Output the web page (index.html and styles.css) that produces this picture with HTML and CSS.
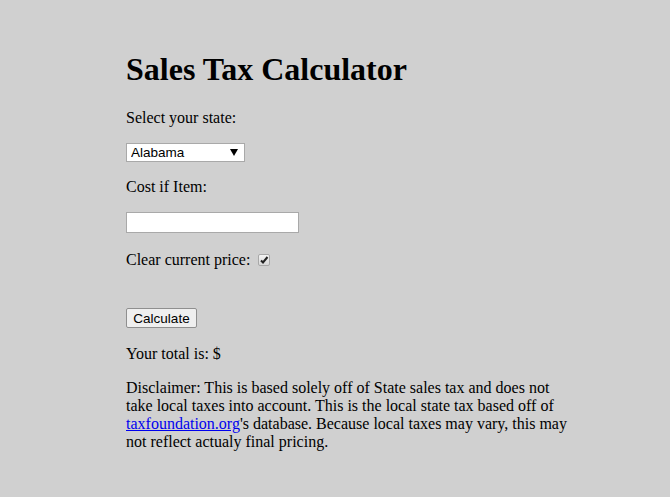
FILE: index.html
```html
<!DOCTYPE html>
<html>
<head>
<meta charset="utf-8">
<link rel="stylesheet" href="styles.css">
</head>
<body class="page">
<div class="wrap">
  <h1 class="title">Sales Tax Calculator</h1>
  <p class="line">Select your state:</p>
  <select class="state">
    <option>Alabama</option>
  </select>
  <p class="line">Cost if Item:</p>
  <input class="cost" type="text">
  <p class="line check-line">Clear current price: <input class="check" type="checkbox" checked></p>
  <div class="spacer"></div>
  <button class="calc">Calculate</button>
  <p class="line total">Your total is: $</p>
  <p class="disclaimer">Disclaimer: This is based solely off of State sales tax and does not take local taxes into account. This is the local state tax based off of <a class="link" href="#">taxfoundation.org</a>'s database. Because local taxes may vary, this may not reflect actualy final pricing.</p>
</div>
</body>
</html>
```
FILE: styles.css
```css
html, body { background: #d0d0d0; }
.page {
  margin: 0;
  font-family: "Liberation Serif", "Times New Roman", serif;
  font-size: 16px;
  color: #000;
}
.wrap {
  width: 450px;
  margin-left: 126px;
  padding-top: 30px;
}
.title {
  font-size: 32px;
  font-weight: bold;
  margin: 21px 0;
}
.line { margin: 16px 0; }
.state {
  -webkit-appearance: none;
  appearance: none;
  display: block;
  width: 119px;
  height: 19px;
  font-family: "Liberation Sans", Arial, sans-serif;
  font-size: 13.5px;
  color: #000;
  border: 1px solid #a9a9a9;
  border-radius: 0;
  padding: 0 0 0 4px;
  background: #fff url("data:image/svg+xml;utf8,<svg xmlns='http://www.w3.org/2000/svg' width='8' height='7'><path d='M0 0H8L4 7Z' fill='black'/></svg>") no-repeat right 6px center;
}
.cost {
  display: block;
  box-sizing: border-box;
  width: 173px;
  height: 21px;
  border: 1px solid #a9a9a9;
  padding: 1px 2px;
  background: #fff;
  margin: 0;
}
.check-line { margin-top: 18px; }
.check {
  -webkit-appearance: none;
  appearance: none;
  width: 12px;
  height: 12px;
  margin: 0 3px 0 4px;
  vertical-align: -1px;
  border: 1px solid #a8a8a8;
  border-radius: 2px;
  background: url("data:image/svg+xml;utf8,<svg xmlns='http://www.w3.org/2000/svg' width='10' height='10'><path d='M2 5.5L4 7.5L8.5 2' stroke='%23222' stroke-width='2' fill='none'/></svg>") no-repeat center, linear-gradient(#f4f4f4, #d8d8d8);
}
.spacer { height: 23px; }
.calc {
  display: block;
  font-family: "Liberation Sans", Arial, sans-serif;
  font-size: 13.5px;
  color: #000;
  width: 71px;
  height: 20px;
  padding: 0;
  background: #efefef;
  border: 1px solid #8f8f8f;
  border-radius: 2px;
}
.total { margin-top: 17px; }
.disclaimer { margin: 16px 0; line-height: 18px; }
.link { color: #0000ee; }
```
